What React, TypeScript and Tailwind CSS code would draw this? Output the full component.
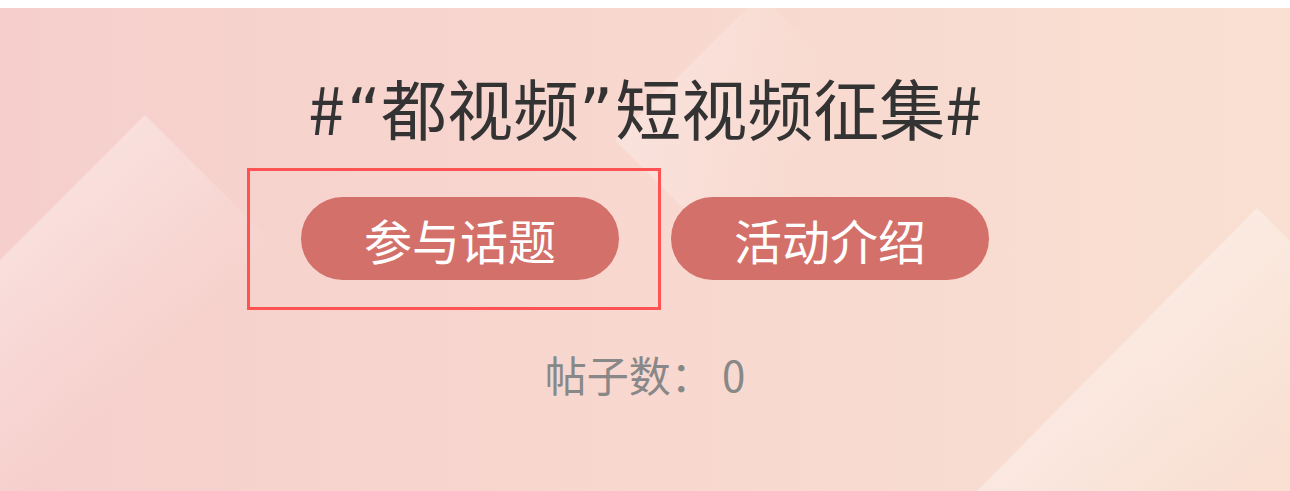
import React from "react";

const cjk = { fontFamily: '"Noto Sans CJK SC", "Noto Sans", sans-serif' };
const latin = { fontFamily: '"DejaVu Sans", "Noto Sans", sans-serif' };

function Backdrop() {
  // pale diamond shapes layered over the pink banner
  return (
    <svg
      className="absolute inset-0 h-full w-full"
      viewBox="0 0 1290 483"
      preserveAspectRatio="none"
    >
      <defs>
        <linearGradient id="leftGlow" gradientUnits="userSpaceOnUse" x1="100" y1="152" x2="230" y2="282">
          <stop offset="0" stopColor="#ffffff" stopOpacity="0.32" />
          <stop offset="1" stopColor="#ffffff" stopOpacity="0" />
        </linearGradient>
        <linearGradient id="midGlow" gradientUnits="userSpaceOnUse" x1="620" y1="80" x2="820" y2="120">
          <stop offset="0" stopColor="#ffffff" stopOpacity="0.3" />
          <stop offset="1" stopColor="#ffffff" stopOpacity="0" />
        </linearGradient>
        <linearGradient id="rightGlow" gradientUnits="userSpaceOnUse" x1="1110" y1="340" x2="1250" y2="480">
          <stop offset="0" stopColor="#ffffff" stopOpacity="0.35" />
          <stop offset="1" stopColor="#ffffff" stopOpacity="0" />
        </linearGradient>
      </defs>
      <polygon points="145,107 300,262 0,562 -155,407" fill="url(#leftGlow)" />
      <polygon points="615,132 760,-13 900,127 715,232" fill="url(#midGlow)" />
      <polygon points="1257,200 1420,363 1240,543 977,483" fill="url(#rightGlow)" />
    </svg>
  );
}

function PillButton({ label }: { label: string }) {
  return (
    <button
      type="button"
      className="flex h-[83px] w-[318px] items-center justify-center rounded-full bg-[#d4706a] text-[48px] leading-none text-white"
    >
      {label}
    </button>
  );
}

export default function App() {
  return (
    <div className="min-h-screen bg-white pt-2" style={cjk}>
      <div className="relative h-[483px] overflow-hidden bg-linear-to-r from-[#f6cfcc] to-[#f9e0d2]">
        <Backdrop />
        <div className="relative flex flex-col items-center">
          <h1 className="mt-[65px] h-[67px] text-[66px] leading-none font-normal text-[#333333]">
            #<span style={latin} className="ml-[2px] leading-none">“</span>都视频<span style={latin} className="mr-[2px] leading-none">”</span>短视频征集#
          </h1>

          <div className="mt-[57px] flex gap-[52px]">
            <div className="relative">
              <PillButton label="参与话题" />
              <div className="pointer-events-none absolute -top-[29px] -bottom-[30px] -left-[54px] -right-[42px] border-[3px] border-[#ff5252]" />
            </div>
            <PillButton label="活动介绍" />
          </div>

          <p className="mt-[73px] text-[42px] leading-none text-[#888888]">
            帖子数： 0
          </p>
        </div>
      </div>
    </div>
  );
}
